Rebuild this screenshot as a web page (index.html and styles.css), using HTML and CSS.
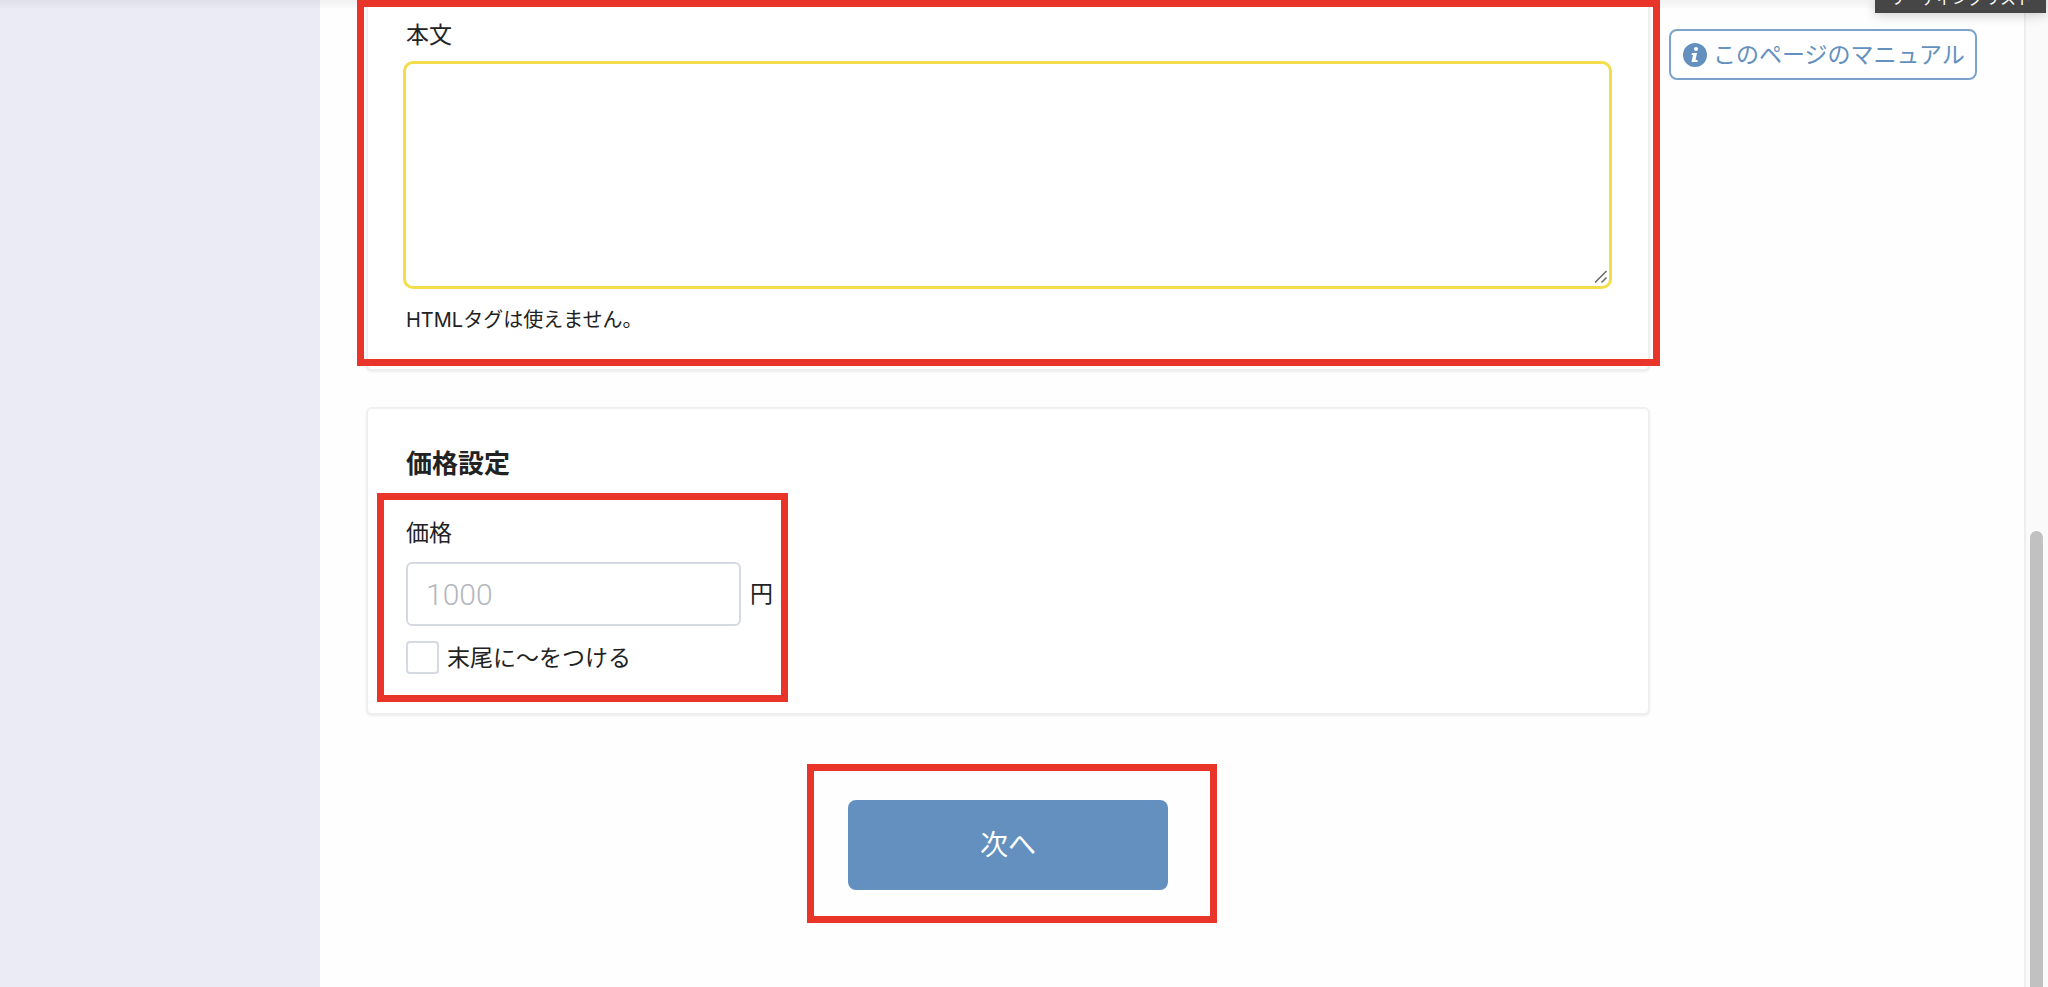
FILE: index.html
```html
<!DOCTYPE html>
<html lang="ja">
<head>
    <meta charset="UTF-8">
    <title>価格設定</title>
    <link rel="stylesheet" href="styles.css">
</head>
<body>
    <div class="header-shadow"></div>
    <div class="tooltip"><span>リーディングリスト</span></div>

    <div class="page">
        <nav class="sidebar"></nav>

        <main class="content">
            <form>
                <section class="card card-body">
                    <label for="honbun">本文</label>
                    <textarea id="honbun"></textarea>
                    <svg class="grip" viewBox="0 0 14 14" width="14" height="14">
                        <path d="M1 12.5L12.5 1M7.5 12.5L12.5 7.5" fill="none" stroke="#666" stroke-width="1.5"/>
                    </svg>
                    <p class="note">HTMLタグは使えません。</p>
                    <div class="mark mark-body"></div>
                </section>

                <section class="card card-price">
                    <h2>価格設定</h2>
                    <div class="price">
                        <label for="kakaku">価格</label>
                        <div class="price-row">
                            <input type="text" id="kakaku" placeholder="1000">
                            <span>円</span>
                        </div>
                        <div class="check-row">
                            <input type="checkbox" id="kara">
                            <label for="kara">末尾に〜をつける</label>
                        </div>
                        <div class="mark mark-price"></div>
                    </div>
                </section>

                <div class="submit">
                    <button type="submit">次へ</button>
                    <div class="mark mark-submit"></div>
                </div>
            </form>
        </main>

        <aside class="help">
            <a href="#" class="manual">
                <svg viewBox="0 0 24 24" width="24" height="24">
                    <circle cx="12" cy="12" r="12" fill="#6390bf"/>
                    <circle cx="13" cy="6" r="2" fill="#fff"/>
                    <path d="M9 10h5l-1.5 7h2v2h-6l1.5-7h-1.5z" fill="#fff"/>
                </svg>
                <span>このページのマニュアル</span>
            </a>
        </aside>

        <div class="scrollbar"><div class="thumb"></div></div>
    </div>
</body>
</html>
```
FILE: styles.css
```css
* {
    box-sizing: border-box;
}

body {
    margin: 0;
    background: #fefefe;
    color: #222;
    font-family: Inter, "Noto Sans CJK JP", sans-serif;
    font-size: 23px;
    line-height: 32px;
    overflow: hidden;
}

.page {
    display: flex;
    min-height: 100vh;
}

.header-shadow {
    position: absolute;
    top: 0;
    left: 0;
    right: 0;
    height: 8px;
    background: linear-gradient(rgba(0, 0, 0, 0.05), rgba(0, 0, 0, 0.01));
}

.tooltip {
    position: absolute;
    top: 0;
    right: 2px;
    z-index: 10;
    display: flex;
    align-items: flex-end;
    justify-content: center;
    width: 171px;
    height: 13px;
    padding-bottom: 5px;
    overflow: hidden;
    background: #464646;
    box-shadow: 0 2px 12px rgba(0, 0, 0, 0.2);
    color: #fff;
    font-size: 16px;
    line-height: 20px;
}

.sidebar {
    width: 320px;
    background: #ebebf5;
}

.content {
    flex: 1;
    padding-left: 46px;
}

.card {
    position: relative;
    background: #fff;
    border: 2px solid #efeff1;
    border-radius: 6px;
    box-shadow: 0 1px 2px rgba(0, 0, 0, 0.08);
}

.card-body {
    padding: 19px 36px 32px 35px;
    border-top: none;
    border-radius: 0 0 6px 6px;
}

.card-body label {
    display: block;
    margin: 0 3px 10px;
}

textarea {
    display: block;
    width: 100%;
    height: 228px;
    padding: 16px;
    background: #fff;
    border: 3px solid #f3dd4b;
    border-radius: 10px;
    outline: none;
    font: inherit;
    resize: none;
}

.grip {
    position: absolute;
    right: 40px;
    top: 270px;
}

.note {
    margin: 14px 3px 0;
    font-size: 20px;
    line-height: 34px;
}

.card-price {
    margin-top: 36px;
    padding: 37px 38px 39px;
}

h2 {
    margin: 0 0 35px;
    font-size: 26px;
    line-height: 36px;
}

.price {
    position: relative;
    width: 370px;
}

.price > label {
    display: block;
    margin-bottom: 13px;
}

.price-row {
    display: flex;
    align-items: center;
    gap: 9px;
}

.price-row input {
    width: 335px;
    height: 64px;
    padding: 0 18px;
    background: #fff;
    border: 2px solid #d5d9e2;
    border-radius: 6px;
    font-family: Roboto, sans-serif;
    font-size: 30px;
    font-weight: 300;
}

.price-row input::placeholder {
    color: #b4b7be;
}

.check-row {
    display: flex;
    align-items: center;
    gap: 8px;
    margin-top: 15px;
}

.check-row input {
    appearance: none;
    width: 33px;
    height: 33px;
    margin: 0;
    background: #fff;
    border: 2px solid #d5d9e2;
    border-radius: 4px;
}

.submit {
    position: relative;
    width: 320px;
    margin: 85px auto 0;
}

button {
    display: block;
    width: 100%;
    height: 90px;
    padding: 0 0 4px;
    background: #6390bf;
    border: none;
    border-radius: 8px;
    color: #fff;
    font-family: inherit;
    font-size: 28px;
}

/* red frames round the fields to fill in */
.mark {
    position: absolute;
    border: 7px solid #e93529;
    pointer-events: none;
}

.mark-body {
    top: 0;
    left: -11px;
    right: -12px;
    bottom: 3px;
}

.mark-price {
    top: -24px;
    left: -29px;
    right: -12px;
    bottom: -28px;
}

.mark-submit {
    top: -36px;
    left: -41px;
    right: -49px;
    bottom: -33px;
}

.help {
    width: 374px;
    padding: 29px 0 0 19px;
}

.manual {
    display: inline-flex;
    align-items: center;
    gap: 6px;
    height: 51px;
    padding: 0 10px 0 12px;
    background: #fff;
    border: 2px solid #7ba3cc;
    border-radius: 8px;
    color: #6390bf;
    text-decoration: none;
    white-space: nowrap;
}

.scrollbar {
    width: 24px;
    padding: 531px 5px 0 4px;
    background: #fafafa;
    border-left: 2px solid #eee;
}

.thumb {
    height: 100%;
    background: #c1c1c1;
    border-radius: 7px 7px 0 0;
}
```
